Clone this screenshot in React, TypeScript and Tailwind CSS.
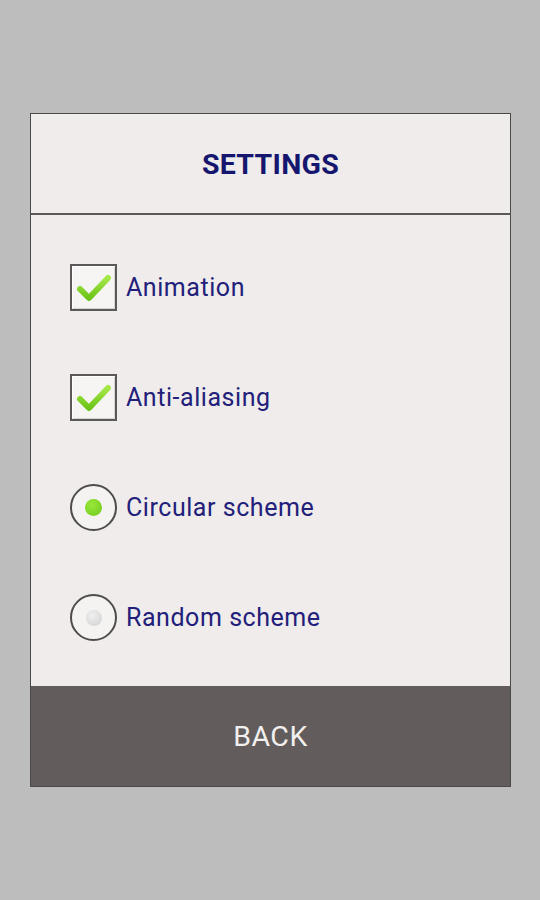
import React, { useState } from 'react';

const font = { fontFamily: 'Roboto, "Liberation Sans", sans-serif' };

const CheckBox: React.FC<{ checked: boolean }> = ({ checked }) => (
  <div className="w-[47px] h-[47px] border-2 border-[#5a5858] bg-[#f6f5f4] shadow-[inset_1px_1px_0_#ffffff,inset_-1px_-1px_0_#d6d4d3] flex items-center justify-center flex-shrink-0">
    {checked && (
      <svg width="34" height="30" viewBox="0 0 34 30">
        <defs>
          <linearGradient id="chk" x1="0" y1="0" x2="0" y2="1">
            <stop offset="0" stopColor="#a6e84a" />
            <stop offset="1" stopColor="#6cc418" />
          </linearGradient>
        </defs>
        <path
          d="M3 16 L12 25 L31 5"
          fill="none"
          stroke="url(#chk)"
          strokeWidth="6"
          strokeLinecap="round"
          strokeLinejoin="round"
        />
      </svg>
    )}
  </div>
);

const Radio: React.FC<{ checked: boolean }> = ({ checked }) => (
  <div className="w-[47px] h-[47px] rounded-full border-2 border-[#4e4c4c] bg-[#f4f3f2] flex items-center justify-center flex-shrink-0">
    {checked ? (
      <div className="w-[17px] h-[17px] rounded-full bg-[radial-gradient(circle_at_40%_35%,#9ae83a,#6cc81a)]" />
    ) : (
      <div className="w-[16px] h-[16px] rounded-full bg-[radial-gradient(circle_at_40%_35%,#f0f0f0,#cfcfcf)]" />
    )}
  </div>
);

export default function App() {
  const [anim, setAnim] = useState(true);
  const [aa, setAa] = useState(true);
  const [scheme, setScheme] = useState<'circular' | 'random'>('circular');

  const rows = [
    { label: 'Animation', control: <CheckBox checked={anim} />, onClick: () => setAnim(!anim) },
    { label: 'Anti-aliasing', control: <CheckBox checked={aa} />, onClick: () => setAa(!aa) },
    { label: 'Circular scheme', control: <Radio checked={scheme === 'circular'} />, onClick: () => setScheme('circular') },
    { label: 'Random scheme', control: <Radio checked={scheme === 'random'} />, onClick: () => setScheme('random') },
  ];

  return (
    <div className="w-[540px] h-[900px] bg-[#bdbdbd] pt-[113px] px-[30px]" style={font}>
      <div className="w-[481px] border border-[#4a4848] bg-[#efeceb] flex flex-col">
        <div className="h-[101px] border-b-2 border-[#5a5858] flex items-center justify-center pt-[3px]">
          <h1 className="text-[28.5px] font-bold text-[#16166e] tracking-[0.3px]">SETTINGS</h1>
        </div>

        <div className="h-[471px] flex flex-col pt-[49px] pl-[39px]">
          {rows.map((r) => (
            <button
              key={r.label}
              onClick={r.onClick}
              className="h-[47px] mb-[63px] flex items-center gap-[9px] text-left"
            >
              {r.control}
              <span className="text-[25px] text-[#22207a] tracking-[0.55px]">{r.label}</span>
            </button>
          ))}
        </div>

        <button className="h-[100px] bg-[#625d5c] flex items-center justify-center pt-[3px]">
          <span className="text-[28.5px] text-[#f2f0ee] tracking-[0.5px]">BACK</span>
        </button>
      </div>
    </div>
  );
}
